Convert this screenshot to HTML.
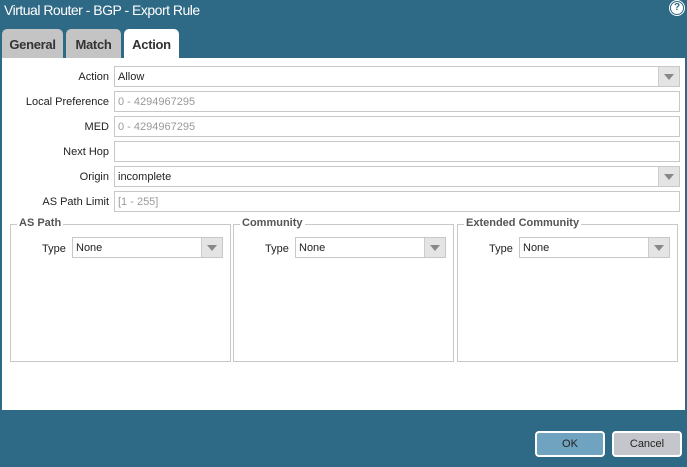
<!DOCTYPE html><html><head><style>
body{margin:0;width:687px;height:467px;background:#2e6985;font-family:"Liberation Sans",sans-serif;font-size:11px;position:relative;overflow:hidden;color:#222}
.a{position:absolute}
.title{left:4px;top:2px;color:#fff;font-size:14px;letter-spacing:-0.5px}
.help{left:670px;top:1px;width:12px;height:12px;border-radius:50%;background:#fff;color:#2e6985;font-weight:bold;font-size:10px;text-align:center;line-height:12px;border:1px solid #2e6985;box-shadow:0 0 0 1px #fff}
.tab{top:29px;height:29px;background:#c4c4c4;border-radius:5px 5px 0 0;font-weight:bold;font-size:13px;text-align:center;line-height:31px;color:#333;letter-spacing:-0.3px}
.content{left:2px;top:58px;width:683px;height:352px;background:#fff}
.lbl{text-align:right;width:109px;left:0}
.inp{left:114px;width:561px;height:19px;border:1px solid #c8c8c8;background:#fff;line-height:21px;padding-left:3px;box-sizing:content-box}
.ph{color:#999}
.dd{position:absolute;right:0;top:0;width:20px;height:19px;background:#e4e4e4;border-left:1px solid #ccc}
.dd:after{content:"";position:absolute;left:5px;top:7px;border-left:5px solid transparent;border-right:5px solid transparent;border-top:6px solid #888}
.fs{top:224px;height:136px;border:1px solid #c8c8c8}
.leg{top:-8px;left:6px;background:#fff;padding:0 2px;font-weight:bold;color:#555;font-size:11px}
.btn{top:431px;border:2px solid #fff;border-radius:4px;text-align:center;line-height:22px;font-size:11px;box-sizing:border-box;height:26px}
</style></head><body>
<div class="a title">Virtual Router - BGP - Export Rule</div>
<div class="a help">?</div>
<div class="a tab" style="left:2px;width:61px">General</div>
<div class="a tab" style="left:66px;width:55px">Match</div>
<div class="a tab" style="left:124px;width:55px;background:#fff;height:30px">Action</div>
<div class="a content"></div>
<div class="a lbl" style="top:71px">Action</div>
<div class="a inp" style="top:66px">Allow<div class="dd"></div></div>
<div class="a lbl" style="top:96px">Local Preference</div>
<div class="a inp ph" style="top:91px">0 - 4294967295</div>
<div class="a lbl" style="top:121px">MED</div>
<div class="a inp ph" style="top:116px">0 - 4294967295</div>
<div class="a lbl" style="top:146px">Next Hop</div>
<div class="a inp" style="top:141px"></div>
<div class="a lbl" style="top:171px">Origin</div>
<div class="a inp" style="top:166px">incomplete<div class="dd"></div></div>
<div class="a lbl" style="top:196px">AS Path Limit</div>
<div class="a inp ph" style="top:191px">[1 - 255]</div>
<div class="a fs" style="left:10px;width:219px"><div class="a leg">AS Path</div><div class="a" style="left:31px;top:18px">Type</div><div class="a inp" style="left:61px;top:12px;width:146px">None<div class="dd"></div></div></div>
<div class="a fs" style="left:233px;width:219px"><div class="a leg">Community</div><div class="a" style="left:31px;top:18px">Type</div><div class="a inp" style="left:61px;top:12px;width:146px">None<div class="dd"></div></div></div>
<div class="a fs" style="left:457px;width:219px"><div class="a leg">Extended Community</div><div class="a" style="left:31px;top:18px">Type</div><div class="a inp" style="left:61px;top:12px;width:146px">None<div class="dd"></div></div></div>
<div class="a btn" style="left:535px;width:70px;background:#6fa3bf">OK</div>
<div class="a btn" style="left:612px;width:70px;background:#c5c6cc">Cancel</div>
</body></html>
